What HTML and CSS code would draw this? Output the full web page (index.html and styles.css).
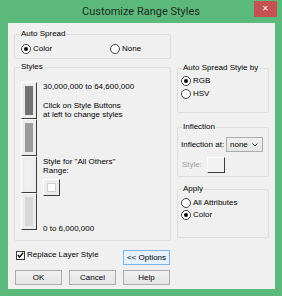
FILE: index.html
```html
<!DOCTYPE html>
<html lang="en">
<head>
<meta charset="UTF-8">
<title>Customize Range Styles</title>
<link rel="stylesheet" href="styles.css">
</head>
<body>

<div class="window">
    <div class="titlebar">
        <span class="title">Customize Range Styles</span>
        <span class="close">&#x2715;</span>
    </div>

    <div class="client">
        <div class="col-left">
            <fieldset class="group auto-spread">
                <legend>Auto Spread</legend>
                <div class="radio-row">
                    <label class="radio wide"><span class="dot on"></span>Color</label>
                    <label class="radio"><span class="dot"></span>None</label>
                </div>
            </fieldset>

            <fieldset class="group styles">
                <legend>Styles</legend>
                <div class="styles-body">
                    <div class="style-stack">
                        <div class="sbtn"><span class="swatch s1"></span></div>
                        <div class="sbtn"><span class="swatch s2"></span></div>
                        <div class="sbtn"><span class="swatch s3"></span></div>
                        <div class="sbtn"><span class="swatch s4"></span></div>
                    </div>
                    <div class="style-text">
                        <div class="range-top">30,000,000 to 64,600,000</div>
                        <p class="hint">Click on Style Buttons<br>at left to change styles</p>
                        <p class="others">Style for "All Others"<br>Range:</p>
                        <div class="mini-btn"><span class="mini-inner"></span></div>
                        <div class="range-bottom">0 to 6,000,000</div>
                    </div>
                </div>
            </fieldset>

            <div class="check-row">
                <label class="check">
                    <span class="box">
                        <svg width="8" height="8" viewBox="0 0 8 8"><polyline points="1,4 3,6.5 7,1.2" fill="none" stroke="#000" stroke-width="1.6"/></svg>
                    </span>Replace Layer Style
                </label>
                <button class="btn default">&lt;&lt; Options</button>
            </div>

            <div class="btn-row">
                <button class="btn">OK</button>
                <button class="btn">Cancel</button>
                <button class="btn">Help</button>
            </div>
        </div>

        <div class="col-right">
            <fieldset class="group rgb">
                <legend>Auto Spread Style by</legend>
                <label class="radio"><span class="dot on"></span>RGB</label>
                <label class="radio next"><span class="dot"></span>HSV</label>
            </fieldset>

            <fieldset class="group inflection">
                <legend>Inflection</legend>
                <div class="infl-row">
                    <span>Inflection at:</span>
                    <div class="combo">
                        <span>none</span>
                        <svg width="6" height="4" viewBox="0 0 6 4"><polyline points="0.5,0.5 3,3 5.5,0.5" fill="none" stroke="#333" stroke-width="1"/></svg>
                    </div>
                </div>
                <div class="infl-style">
                    <span class="disabled">Style:</span>
                    <div class="sbtn plain"></div>
                </div>
            </fieldset>

            <fieldset class="group apply">
                <legend>Apply</legend>
                <label class="radio"><span class="dot"></span>All Attributes</label>
                <label class="radio next"><span class="dot on"></span>Color</label>
            </fieldset>
        </div>
    </div>
</div>

</body>
</html>
```

FILE: styles.css
```css
* {
    box-sizing: border-box;
}
body {
    margin: 0;
    background-color: #5cb97c; /* window frame */
    font-family: "Liberation Sans", Arial, sans-serif;
    font-size: 8px;
    line-height: 10px;
    color: #000000;
}
.window {
    width: 282px;
    height: 296px;
    display: flex;
    flex-direction: column;
}
.titlebar {
    height: 23px;
    display: grid;
    grid-template-columns: 1fr auto 1fr;
}
.title {
    grid-column: 2;
    font-family: Roboto, "Liberation Sans", sans-serif;
    font-size: 11px;
    line-height: 23px;
    color: #1d2a22;
}
.close {
    grid-column: 3;
    justify-self: end;
    width: 23px;
    height: 16px;
    margin: 1px 5px 0 0;
    background-color: #c75050;
    color: #ffffff;
    text-align: center;
    font-size: 8px;
    line-height: 16px;
}
.client {
    height: 266px;
    margin: 0 7px 0 8px;
    background-color: #f0f0f0;
    display: flex;
    gap: 6px;
    padding: 6px 0 0 6px;
}
.col-left {
    width: 157px;
    display: flex;
    flex-direction: column;
}
.col-right {
    width: 92px;
    display: flex;
    flex-direction: column;
    padding-top: 34px;
}

/* group boxes */
.group {
    margin: 0;
    min-width: 0;
    border: 1px solid #dedede;
    border-radius: 2px;
    padding: 0 0 0 6px;
}
.group legend {
    padding: 0 1px;
    margin-left: -1px;
    line-height: 10px;
}
.auto-spread {
    padding-top: 5px;
    padding-bottom: 4px;
}
.styles {
    margin-top: 3px;
    padding-top: 10px;
    padding-bottom: 6px;
}
.col-right .group {
    padding-left: 4px;
}
.col-right .group legend {
    margin-left: 0;
}
.rgb {
    padding-top: 3px;
    padding-bottom: 13px;
}
.inflection {
    margin-top: 9px;
    padding-top: 5px;
    padding-bottom: 3px;
}
.apply {
    margin-top: 7px;
    padding-top: 4px;
    padding-bottom: 17px;
}

/* radios + checkbox */
.radio-row {
    display: flex;
}
.radio {
    display: flex;
    align-items: center;
    height: 10px;
}
.radio.wide {
    width: 89px;
}
.col-right .radio {
    margin-left: -1px;
}
.rgb .radio.next {
    margin-top: 3px;
}
.apply .radio.next {
    margin-top: 2px;
}
.dot {
    width: 10px;
    height: 10px;
    border: 1px solid #454545;
    border-radius: 50%;
    background-color: #ffffff;
    margin-right: 2px;
    display: flex;
    align-items: center;
    justify-content: center;
}
.dot.on::after {
    content: '';
    width: 4px;
    height: 4px;
    border-radius: 50%;
    background-color: #000000;
}
.check {
    display: flex;
    align-items: center;
    height: 10px;
    margin-left: 2px;
}
.box {
    width: 9px;
    height: 9px;
    border: 1px solid #3a3a3a;
    background-color: #ffffff;
    margin-right: 2px;
    display: flex;
    align-items: center;
    justify-content: center;
}

/* style buttons */
.styles-body {
    display: flex;
    gap: 6px;
}
.style-stack {
    display: flex;
    flex-direction: column;
}
.sbtn {
    width: 16px;
    height: 37px;
    background-color: #ececec;
    border: 1px solid;
    border-color: #ffffff #3c3c3c #3c3c3c #ffffff;
    display: flex;
    align-items: center;
    justify-content: center;
}
.swatch {
    width: 8px;
    height: 29px;
}
.s1 { background-color: #737373; }
.s2 { background-color: #9b9b9b; }
.s3 { background-color: #efefef; }
.s4 { background-color: #d7d7d7; }

.style-text p {
    margin: 0;
    line-height: 9px;
}
.hint {
    margin-top: 9px !important;
}
.others {
    margin-top: 38px !important;
}
.mini-btn {
    width: 17px;
    height: 17px;
    margin-top: 4px;
    background-color: #ececec;
    border: 1px solid;
    border-color: #ffffff #3c3c3c #3c3c3c #ffffff;
    display: flex;
    align-items: center;
    justify-content: center;
}
.mini-inner {
    width: 9px;
    height: 9px;
    background-color: #ffffff;
    border: 1px solid #d0d0d0;
}
.range-bottom {
    margin-top: 28px;
}

/* bottom rows */
.check-row {
    margin-top: 9px;
    display: flex;
    justify-content: space-between;
    align-items: flex-start;
}
.btn {
    width: 47px;
    height: 15px;
    padding: 0;
    font-family: inherit;
    font-size: 8px;
    line-height: 13px;
    color: #000000;
    background: linear-gradient(#f0f0f0, #e5e5e5);
    border: 1px solid #acacac;
}
.btn.default {
    margin-right: 1px;
    background: #e5f1fb;
    border-color: #7eb4ea;
}
.btn-row {
    margin-top: 5px;
    padding: 0 1px;
    display: flex;
    justify-content: space-between;
}

/* inflection */
.infl-row {
    display: flex;
    align-items: center;
    height: 15px;
    margin-left: -1px;
}
.combo {
    margin-left: auto;
    margin-right: 5px;
    width: 37px;
    height: 15px;
    border: 1px solid #acacac;
    background: linear-gradient(#f0f0f0, #e5e5e5);
    display: flex;
    align-items: center;
    justify-content: space-between;
    padding: 0 4px 0 3px;
}
.infl-style {
    margin-top: 5px;
    display: flex;
    align-items: center;
}
.disabled {
    width: 25px;
    color: #a0a0a0;
}
.sbtn.plain {
    width: 18px;
    height: 16px;
    background-color: #f2f2f2;
}
```
